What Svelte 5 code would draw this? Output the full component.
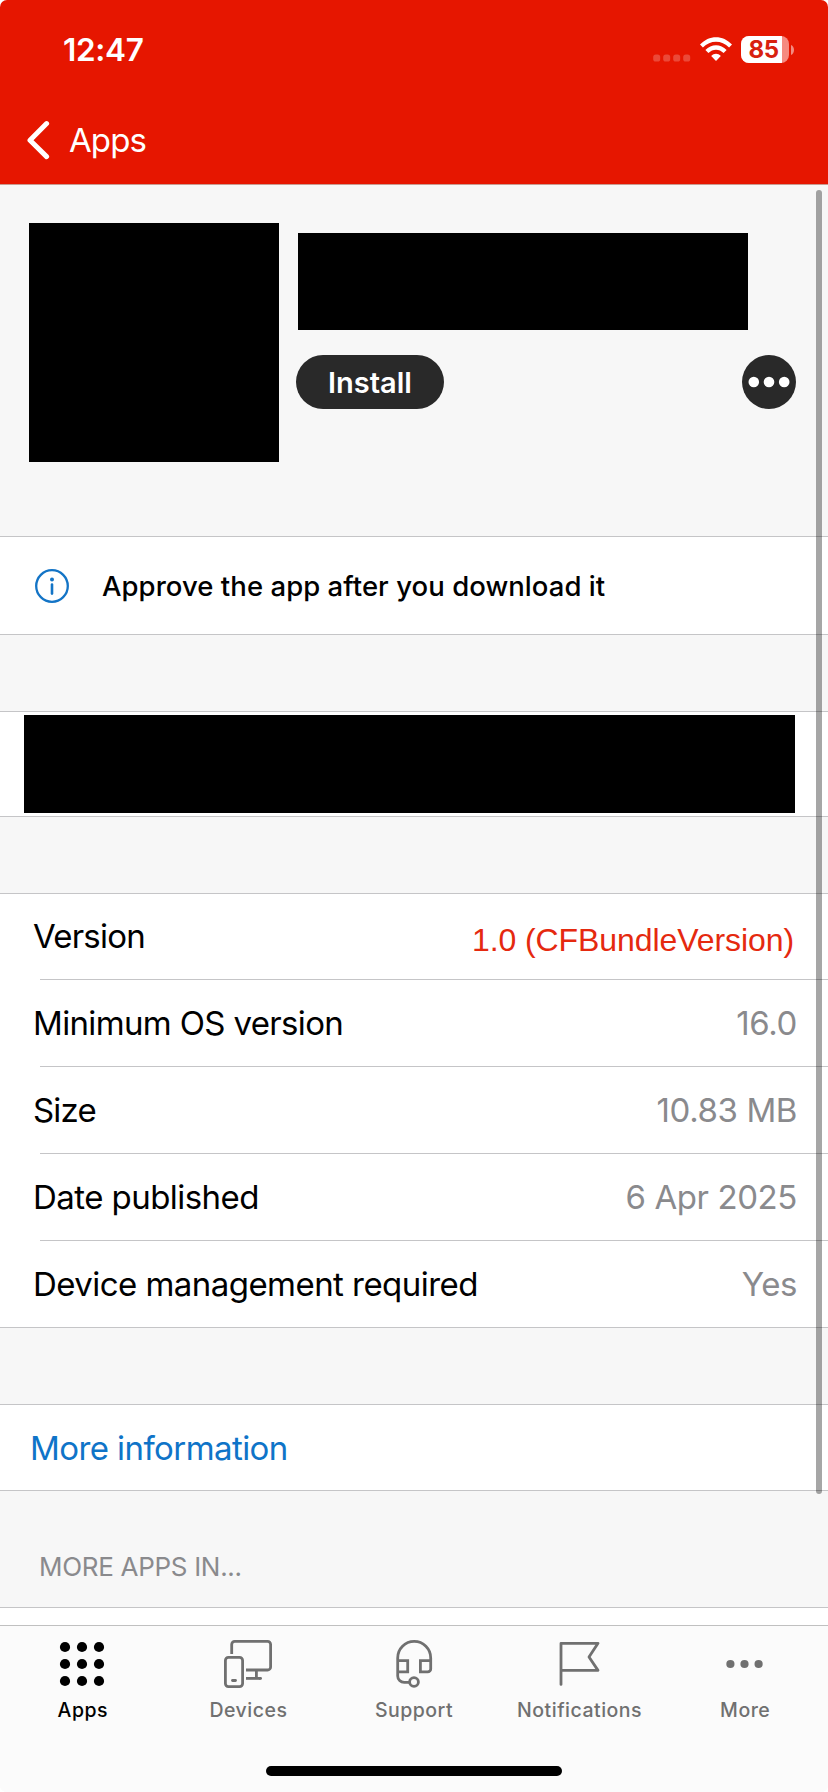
<script>
  const details = [
    { label: 'Version', value: '1.0 (CFBundleVersion)', alert: true, space: -0.8 },
    { label: 'Minimum OS version', value: '16.0', space: -0.65 },
    { label: 'Size', value: '10.83 MB', space: -0.8 },
    { label: 'Date published', value: '6 Apr 2025', space: -0.55 },
    { label: 'Device management required', value: 'Yes', space: -0.55 }
  ];
  const tabs = ['Apps', 'Devices', 'Support', 'Notifications', 'More'];
  const grid = [7, 24, 41];
</script>

<div class="screen">
  <header>
    <div class="status">
      <span class="time">12:47</span>
      <div class="signals">
        <svg class="dots" width="38" height="8" viewBox="0 0 38 8">
          {#each [0, 10, 20, 30] as x}
            <rect x={x + 0.2} y="0.5" width="7" height="7" rx="2.6" fill="#fff" fill-opacity=".22" />
          {/each}
        </svg>
        <svg class="wifi" width="32" height="24" viewBox="0 0 32 24">
          <path d="M0 7.6C8.8-2.3 23.2-2.3 32 7.6l-2.9 2.9C21.7 2.8 10.3 2.8 2.9 10.5z" fill="#fff" />
          <path d="M5.4 13.1c5.9-6.6 15.3-6.6 21.2 0l-3 3c-4.4-4.6-10.8-4.6-15.2 0z" fill="#fff" />
          <path d="M11.2 18.9c2.8-2.8 6.8-2.8 9.6 0L16 24z" fill="#fff" />
        </svg>
        <div class="battery"><span class="level">85</span></div>
        <svg class="nub" width="3" height="10" viewBox="0 0 3 10"><path d="M0 0c4 1.6 4 8.4 0 10z" fill="#fff" fill-opacity=".5" /></svg>
      </div>
    </div>
    <nav class="back">
      <svg width="24" height="40" viewBox="0 0 24 40"><path d="M19.6 3.6 3 20.2l16.6 16.4" fill="none" stroke="#fff" stroke-width="5" stroke-linecap="round" stroke-linejoin="round" /></svg>
      <span>Apps</span>
    </nav>
  </header>

  <main>
    <section class="hero">
      <div class="app-icon"></div>
      <div class="app-body">
        <div class="app-name"></div>
        <div class="actions">
          <button class="install">Install</button>
          <button class="more" aria-label="More">
            <svg width="54" height="54" viewBox="0 0 54 54" fill="#fff"><circle cx="11.8" cy="27" r="5.3" /><circle cx="27" cy="27" r="5.3" /><circle cx="42.2" cy="27" r="5.3" /></svg>
          </button>
        </div>
      </div>
    </section>

    <section class="panel notice">
      <svg width="34" height="34" viewBox="0 0 34 34"><circle cx="17" cy="17" r="15.8" fill="none" stroke="#1374c6" stroke-width="2.3" /><circle cx="17" cy="10.4" r="2" fill="#1374c6" /><path d="M17 15.6v9" stroke="#1374c6" stroke-width="2.6" stroke-linecap="round" /></svg>
      <span>Approve the app after you download it</span>
    </section>

    <section class="panel description"><div></div></section>

    <section class="panel details">
      {#each details as row}
        <div class="row">
          <span class="label" style="letter-spacing:{row.space}px">{row.label}</span>
          <span class="value" class:alert={row.alert}>{row.value}</span>
        </div>
      {/each}
    </section>

    <section class="panel link"><span>More information</span></section>

    <h2>MORE APPS IN...</h2>
    <div class="panel next"></div>
    <div class="scrollbar"></div>
  </main>

  <footer>
    <div class="tabs">
      {#each tabs as tab, i}
        <div class="tab" class:active={i === 0}>
          <svg width="48" height="48" viewBox="0 0 48 48" fill="none" stroke="currentColor" stroke-width="2.8">
            {#if tab === 'Apps'}
              {#each grid as y}{#each grid as x}<circle cx={x} cy={y} r="5.1" fill="currentColor" stroke="none" />{/each}{/each}
            {:else if tab === 'Devices'}
              <path d="M7.7 14V4.4a3 3 0 0 1 3-3h32.9a3 3 0 0 1 3 3V27a3 3 0 0 1-3 3H22M32.4 30v8.4" />
              <path d="M22 38.4h14.5" /><path d="M36 38.4h.6" stroke-linecap="round" />
              <rect x="1.4" y="17.4" width="17.2" height="29.2" rx="3" />
              <path d="M8.5 40.5h3" stroke-linecap="round" />
            {:else if tab === 'Support'}
              <path d="M19.5 42.4h-5.3a6.5 6.5 0 0 1-6.5-6.5v-18a16.5 16.5 0 0 1 33 0v11a3 3 0 0 1-3 3h-7.3V20.7h10.3M7.7 20.7h10v11.2h-10" />
              <circle cx="24" cy="42" r="4.4" />
            {:else if tab === 'Notifications'}
              <path d="M5 44.4V3.3h37L33 17l9 13.4h-37" stroke-linecap="round" stroke-linejoin="round" />
            {:else}
              {#each [9.4, 23.5, 37.6] as x}<circle cx={x} cy="24" r="4.1" fill="currentColor" stroke="none" />{/each}
            {/if}
          </svg>
          <span>{tab}</span>
        </div>
      {/each}
    </div>
    <div class="home"></div>
  </footer>
</div>

<style>
  :global(body) { background: #fff; }
  .screen {
    width: 828px; height: 1792px; box-sizing: border-box; overflow: hidden;
    display: flex; flex-direction: column; border-radius: 7px;
    background: #f7f7f7; color: #000; font-family: Inter, "Liberation Sans", sans-serif;
  }
  header { flex: none; height: 185px; box-sizing: border-box; background: #e61600; border-bottom: 1px solid #c99b91; color: #fff; }
  .status { height: 100px; display: flex; justify-content: space-between; padding: 0 34px 0 63px; }
  .time { font-size: 31.5px; font-weight: 600; line-height: 100px; letter-spacing: -0.3px; }
  .signals { display: flex; align-items: center; }
  .dots { margin-top: 15px; margin-right: 8.5px; }
  .wifi { margin-right: 9.5px; margin-top: -2px; }
  .battery { width: 48px; height: 27px; border-radius: 8px; overflow: hidden; background: #f58a80; margin-top: -1px; }
  .level { display: block; width: 41px; height: 27px; background: #fff; color: #d8210f; font-size: 24px; line-height: 27px; font-weight: 700; text-indent: 7.5px; letter-spacing: -0.4px; }
  .nub { margin-left: 2px; }
  .back { height: 80px; display: flex; align-items: center; padding-left: 27px; gap: 18px; font-size: 33px; letter-spacing: -0.9px; }
  main { position: relative; flex: none; height: 1440px; }
  .hero { height: 351px; box-sizing: border-box; padding: 38px 32px 0 29px; display: flex; gap: 17px; }
  .app-icon { width: 250px; height: 239px; background: #000; }
  .app-body { flex: 1; padding-top: 10px; }
  .app-name { width: 450px; height: 97px; margin-left: 2px; background: #000; }
  .actions { display: flex; justify-content: space-between; margin-top: 25px; }
  button { border: 0; padding: 0; margin: 0; background: #292929; color: #fff; font-family: inherit; }
  .install { width: 148px; height: 54px; border-radius: 27px; font-size: 29px; font-weight: 600; letter-spacing: 0; }
  .more { width: 54px; height: 54px; border-radius: 50%; }
  .more svg { display: block; }
  .panel { background: #fff; border-top: 1px solid #c5c5c7; border-bottom: 1px solid #c5c5c7; box-sizing: border-box; margin-bottom: 76px; }
  .notice { height: 99px; display: flex; align-items: center; gap: 33px; padding-left: 35px; font-size: 27.5px; font-weight: 500; letter-spacing: 0.05px; }
  .description { height: 106px; padding: 3px 33px 0 24px; }
  .description div { height: 98px; background: #000; }
  .details { height: 435px; }
  .row { height: 87px; box-sizing: border-box; display: flex; justify-content: space-between; align-items: center; padding: 0 31px 2px 33px; font-size: 33px; background: linear-gradient(#c5c5c7, #c5c5c7) right bottom / calc(100% - 40px) 1px no-repeat; }
  .row:first-child { height: 86px; }
  .row:last-child { background: none; }
  .value { color: #8a8a8d; letter-spacing: -0.4px; }
  .value.alert { font-family: "Liberation Sans", sans-serif; font-size: 32px; color: #e5290f; letter-spacing: -0.08px; padding: 8px 3px 0 0; }
  .link { height: 87px; margin-bottom: 0; display: flex; align-items: center; padding-left: 30px; font-size: 33px; color: #0f74c8; letter-spacing: -0.58px; }
  h2 { margin: 0; height: 116px; box-sizing: border-box; padding: 61px 0 0 39px; font-size: 26px; line-height: 30px; font-weight: 400; color: #8a8a8d; letter-spacing: -0.3px; }
  .next { height: 18px; border-bottom: 0; margin: 0; }
  .scrollbar { position: absolute; right: 6px; top: 5px; width: 6px; height: 1304px; border-radius: 3px; background: rgba(0, 0, 0, .35); }
  footer { flex: 1; display: flex; flex-direction: column; justify-content: space-between; align-items: center; background: #fbfbfb; border-top: 1px solid #c0c0c0; }
  .tabs { width: 828px; display: grid; grid-template-columns: repeat(5, 1fr); padding-top: 14px; box-sizing: border-box; }
  .tab { display: flex; flex-direction: column; align-items: center; color: #707070; font-size: 19.5px; line-height: 24px; font-weight: 500; letter-spacing: 0.5px; }
  .tab svg { display: block; margin-bottom: 10px; }
  .tab:first-child svg { margin-right: 1.5px; }
  .active { color: #000; }
  .home { width: 296px; height: 10px; border-radius: 5px; background: #000; margin-bottom: 16px; }
</style>
